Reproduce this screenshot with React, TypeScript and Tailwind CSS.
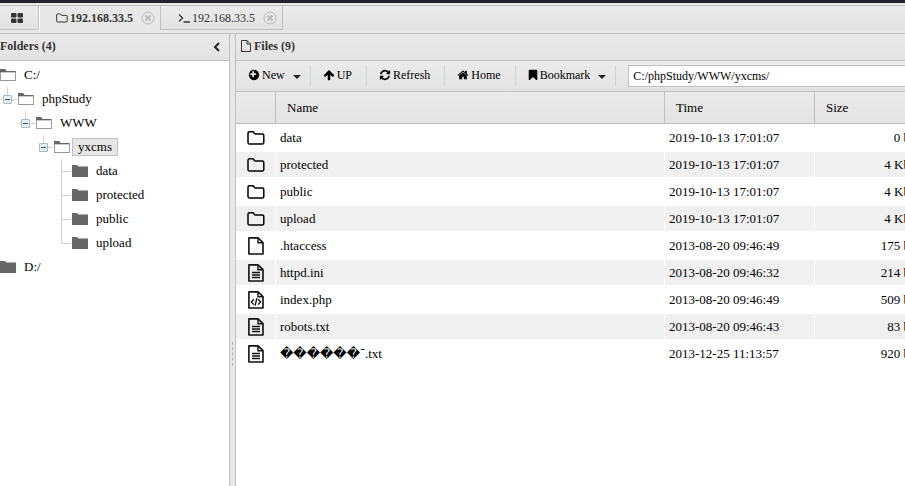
import React, { useState } from "react";

type Kind = "folder" | "file" | "text" | "code";

interface Entry {
  name: string;
  time: string;
  size: string;
  kind: Kind;
}

interface Node {
  name: string;
  open?: boolean;
  children?: Node[];
}

const entries: Entry[] = [
  { name: "data", time: "2019-10-13 17:01:07", size: "0 b", kind: "folder" },
  { name: "protected", time: "2019-10-13 17:01:07", size: "4 Kb", kind: "folder" },
  { name: "public", time: "2019-10-13 17:01:07", size: "4 Kb", kind: "folder" },
  { name: "upload", time: "2019-10-13 17:01:07", size: "4 Kb", kind: "folder" },
  { name: ".htaccess", time: "2013-08-20 09:46:49", size: "175 b", kind: "file" },
  { name: "httpd.ini", time: "2013-08-20 09:46:32", size: "214 b", kind: "text" },
  { name: "index.php", time: "2013-08-20 09:46:49", size: "509 b", kind: "code" },
  { name: "robots.txt", time: "2013-08-20 09:46:43", size: "83 b", kind: "text" },
  {
    name: "\uFFFD\uFFFD\uFFFD\uFFFD\uFFFD\uFFFD\u05BE.txt",
    time: "2013-12-25 11:13:57",
    size: "920 b",
    kind: "text",
  },
];

const tree: Node[] = [
  {
    name: "C:/",
    open: true,
    children: [
      {
        name: "phpStudy",
        open: true,
        children: [
          {
            name: "WWW",
            open: true,
            children: [
              {
                name: "yxcms",
                open: true,
                children: [
                  { name: "data" },
                  { name: "protected" },
                  { name: "public" },
                  { name: "upload" },
                ],
              },
            ],
          },
        ],
      },
    ],
  },
  { name: "D:/" },
];

const glyphs = {
  plus: "M1216 832v-128q0-26-19-45t-45-19h-256v-256q0-26-19-45t-45-19h-128q-26 0-45 19t-19 45v256h-256q-26 0-45 19t-19 45v128q0 26 19 45t45 19h256v256q0 26 19 45t45 19h128q26 0 45-19t19-45v-256h256q26 0 45-19t19-45zm448 64q0 209-103 385.5t-279.5 279.5-385.5 103-385.5-103-279.5-279.5-103-385.5 103-385.5 279.5-279.5 385.5-103 385.5 103 279.5 279.5 103 385.5z",
  up: "M1675 971q0 51-37 90l-75 75q-38 38-91 38-54 0-90-38l-294-293v704q0 52-37.5 84.5t-90.5 32.5h-128q-53 0-90.5-32.5t-37.5-84.5v-704l-294 293q-36 38-90 38t-90-38l-75-75q-38-38-38-90 0-53 38-91l651-651q35-37 90-37 54 0 91 37l651 651q37 39 37 91z",
  refresh:
    "M1639 1056q0 5-1 7-64 268-268 434.5t-478 166.5q-146 0-282.5-55t-243.5-157l-129 129q-19 19-45 19t-45-19-19-45v-448q0-26 19-45t45-19h448q26 0 45 19t19 45-19 45l-137 137q71 66 161 102t187 36q134 0 250-65t186-179q11-17 53-117 8-23 30-23h192q13 0 22.5 9.5t9.5 22.5zm25-800v448q0 26-19 45t-45 19h-448q-26 0-45-19t-19-45 19-45l138-138q-148-137-349-137-134 0-250 65t-186 179q-11 17-53 117-8 23-30 23h-199q-13 0-22.5-9.5t-9.5-22.5v-7q65-268 270-434.5t480-166.5q146 0 284 55.5t245 156.5l130-129q19-19 45-19t45 19 19 45z",
  home: "M1472 992v480q0 26-19 45t-45 19h-384v-384h-256v384h-384q-26 0-45-19t-19-45v-480q0-1 .5-3t.5-3l575-474 575 474q1 2 1 6zm223-69l-62 74q-8 9-21 11h-3q-13 0-21-7l-692-577-692 577q-12 8-24 7-13-2-21-11l-62-74q-8-10-7-23.5t11-21.5l719-599q32-26 76-26t76 26l244 204v-195q0-14 9-23t23-9h192q14 0 23 9t9 23v408l219 182q10 8 11 21.5t-7 23.5z",
  bookmark:
    "M1420 128q23 0 44 9 33 13 52.5 41t19.5 62v1289q0 34-19.5 62t-52.5 41q-19 8-44 8-48 0-83-32l-441-424-441 424q-36 33-83 33-23 0-44-9-33-13-52.5-41t-19.5-62v-1289q0-34 19.5-62t52.5-41q21-9 44-9h1048z",
};

function Glyph({ name }: { name: keyof typeof glyphs }) {
  const narrow = name === "bookmark";
  return (
    <svg
      className={narrow ? "h-3 w-[10px] shrink-0" : "size-3 shrink-0"}
      viewBox={narrow ? "149 0 1493 1792" : "0 0 1792 1792"}
      fill="currentColor"
      aria-hidden="true"
    >
      <path d={glyphs[name]} />
    </svg>
  );
}

function FolderOutline({ className, stroke }: { className: string; stroke: number }) {
  return (
    <svg className={className} viewBox="0 0 18 14" fill="none" stroke="currentColor" strokeWidth={stroke} aria-hidden="true">
      <path d="M1 2.3Q1 .8 2.6 .8H5.6Q7.1 .8 7.1 2Q7.1 3 8.5 3H15.2Q16.8 3 16.8 4.6V11.4Q16.8 13 15.2 13H2.6Q1 13 1 11.4Z" />
    </svg>
  );
}

function FileOutline({ kind }: { kind: Kind }) {
  return (
    <svg className="h-[18px] w-4" viewBox="0 0 16 18" fill="none" stroke="#111" aria-hidden="true">
      <path d="M.9 .9H10L15 5.7V17H.9Z" strokeWidth="1.6" strokeLinejoin="round" />
      <path d="M10 1V5.8H15" strokeWidth="1.4" />
      {kind === "text" && <path d="M4 8.5H12M4 11H12M4 13.5H12" strokeWidth="1.3" />}
      {kind === "code" && <path d="M5.8 8.2L3.4 11L5.8 13.6M10.2 8.2L12.6 11L10.2 13.6M8.9 7.2L7.1 14.6" strokeWidth="1.4" />}
    </svg>
  );
}

function TreeFolder({ open }: { open?: boolean }) {
  return (
    <svg className="h-3 w-4 shrink-0" viewBox="0 0 16 12" aria-hidden="true">
      {open ? (
        <>
          <path d="M0 0H5L6.5 2H16V12H0Z" fill="#999" />
          <path d="M0 0H5L6.5 2H15V3H0Z" fill="#666" />
          <path d="M1 3.5H15V11H1Z" fill="#fff" />
        </>
      ) : (
        <path d="M0 0H5L6.5 1.5H16V12H0Z" fill="#666" />
      )}
    </svg>
  );
}

function Branch({ node, last, onToggle }: { node: Node; last: boolean; onToggle: () => void }) {
  if (!node.children) {
    return (
      <svg className="h-6 w-[18px] shrink-0" viewBox="0 0 18 24" fill="none" stroke="#d0d0d0" aria-hidden="true">
        <path d={last ? "M7.5 0V12.5H17" : "M7.5 0V24M7.5 12.5H17"} />
      </svg>
    );
  }
  return (
    <button type="button" aria-label={`Toggle ${node.name}`} onClick={onToggle} className="h-6 w-[18px] shrink-0">
      <svg className="h-6 w-[18px]" viewBox="0 0 18 24" fill="none" aria-hidden="true">
        <path d="M7.5 0V8M12 12.5H17" stroke="#d0d0d0" />
        <rect x="3.5" y="8.5" width="8" height="8" rx=".5" fill="#e4eef3" stroke="#a9b9c2" />
        <path d="M5 12.5H10" stroke="#34556b" />
      </svg>
    </button>
  );
}

function TreeItem({ node, root, last, selected, onSelect }: {
  node: Node;
  root?: boolean;
  last: boolean;
  selected: string;
  onSelect: (name: string) => void;
}) {
  const [open, setOpen] = useState(Boolean(node.open));
  const active = selected === node.name;
  return (
    <li>
      <div className="flex h-6 items-center">
        {!root && <Branch node={node} last={last} onToggle={() => setOpen(!open)} />}
        <TreeFolder open={open && Boolean(node.children)} />
        <button
          type="button"
          onClick={() => onSelect(node.name)}
          className={`ml-0.5 h-[18px] border px-[5px] leading-4 ${active ? "border-[#c0c0c0] bg-[#e7e7e7]" : "border-transparent"}`}
        >
          {node.name}
        </button>
      </div>
      {open && node.children && (
        <ul className={root ? "" : "pl-[18px]"}>
          {node.children.map((child, i) => (
            <TreeItem key={child.name} node={child} last={i === node.children!.length - 1} selected={selected} onSelect={onSelect} />
          ))}
        </ul>
      )}
    </li>
  );
}

function CloseButton({ label }: { label: string }) {
  return (
    <button type="button" aria-label={label} className="ml-2">
      <svg className="size-[14px]" viewBox="0 0 14 14" fill="none" stroke="#bcbcbc" aria-hidden="true">
        <circle cx="7" cy="7" r="6" />
        <path d="M4.5 4.5L9.5 9.5M9.5 4.5L4.5 9.5" strokeWidth="2" />
      </svg>
    </button>
  );
}

function Caret() {
  return (
    <svg className="ml-1.5 mt-1 h-1 w-2" viewBox="0 0 8 4" fill="#222" aria-hidden="true">
      <path d="M0 0H8L4 4Z" />
    </svg>
  );
}

function ToolButton({ icon, label, menu }: { icon: keyof typeof glyphs; label: string; menu?: boolean }) {
  return (
    <button
      type="button"
      className={`flex h-5 shrink-0 items-center gap-0.5 border-r border-[#c3d5db] pb-0.5 pl-3 leading-[18px] ${menu ? "pr-[9px]" : "pr-[14px]"}`}
    >
      <Glyph name={icon} />
      <span>{label}</span>
      {menu && <Caret />}
    </button>
  );
}

const bar = "bg-linear-to-b from-[#ebebeb] to-[#e3e3e3]";
const headCell = "h-8 border-r border-b border-[#c0c0c0] pl-[11px] text-left font-normal";
const bodyCell = "h-[27px] border-y border-r border-white";

export default function App() {
  const [selected, setSelected] = useState("yxcms");
  const [path, setPath] = useState("C:/phpStudy/WWW/yxcms/");

  return (
    <div className="flex h-screen flex-col overflow-hidden bg-[#e8e8e8] font-['Liberation_Serif','DejaVu_Sans',serif] text-[13px] text-black">
      <div className="h-[3px] shrink-0 bg-[#23222f]" />
      <nav aria-label="Sessions" className="mt-0.5 flex h-[25px] shrink-0 border-t border-[#c0c0c0] text-xs text-[#333]">
        <div className={`flex w-[39px] border-r border-b border-[#c0c0c0] ${bar}`}>
          <button type="button" aria-label="Home" className="flex flex-1 items-center pl-[11px]">
            <svg className="h-[10px] w-3" viewBox="0 0 12 10" fill="#333" aria-hidden="true">
              <rect width="5.5" height="4.5" rx="1" />
              <rect x="6.5" width="5.5" height="4.5" rx="1" />
              <rect y="5.5" width="5.5" height="4.5" rx="1" />
              <rect x="6.5" y="5.5" width="5.5" height="4.5" rx="1" />
            </svg>
          </button>
        </div>
        <div className="flex items-center border-r border-l border-r-[#c0c0c0] border-l-white bg-[#e8e8e8] pr-[5px] pl-4">
          <button type="button" aria-current="page" className="flex items-center gap-0.5 font-bold">
            <FolderOutline className="h-[10px] w-3" stroke={1.5} />
            192.168.33.5
          </button>
          <CloseButton label="Close files tab" />
        </div>
        <div className={`flex items-center border-r border-b border-[#c0c0c0] pr-[5px] pl-[17px] ${bar}`}>
          <button type="button" className="flex items-center gap-0.5">
            <svg className="h-[10px] w-3" viewBox="0 0 12 10" fill="none" stroke="#333" strokeWidth="1.3" aria-hidden="true">
              <path d="M1 1.5L4.5 5L1 8.5M5.5 9H12" />
            </svg>
            192.168.33.5
          </button>
          <CloseButton label="Close terminal tab" />
        </div>
        <div className={`flex-1 border-b border-[#e0e0e0] ${bar}`} />
      </nav>

      <main className="mt-[3px] flex min-h-[640px] flex-1 border-t border-[#c0c0c0]">
        <aside className="flex w-[230px] shrink-0 flex-col border-r border-[#c0c0c0] bg-white">
          <div className={`flex h-[27px] items-center justify-between border-b border-[#c0c0c0] pr-2 text-xs text-[#333] ${bar}`}>
            <h2 className="pb-0.5 font-bold">Folders (4)</h2>
            <button type="button" aria-label="Collapse folders">
              <svg className="h-[10px] w-2" viewBox="0 0 8 10" fill="none" stroke="#222" strokeWidth="2" aria-hidden="true">
                <path d="M6 1L2 5L6 9" />
              </svg>
            </button>
          </div>
          <ul className="pt-0.5">
            {tree.map((node, i) => (
              <TreeItem key={node.name} node={node} root last={i === tree.length - 1} selected={selected} onSelect={setSelected} />
            ))}
          </ul>
        </aside>

        <div role="separator" aria-orientation="vertical" className="flex w-[5px] shrink-0 items-center justify-center">
          <div className="h-6 border-l border-dashed border-[#b0b0b0]" />
        </div>

        <section className="flex min-w-0 flex-1 flex-col overflow-hidden border-l border-[#c0c0c0] bg-white">
          <div className={`flex h-[27px] shrink-0 items-center gap-[3px] border-b border-[#c0c0c0] pb-0.5 pl-[5px] text-xs text-[#333] ${bar}`}>
            <svg className="h-3 w-[10px]" viewBox="0 0 10 12" fill="none" stroke="#333" aria-hidden="true">
              <path d="M.5 .5H6L9.5 4V11.5H.5ZM6 .5V4H9.5" />
            </svg>
            <h2 className="font-bold">Files (9)</h2>
          </div>

          <div className={`flex h-[31px] shrink-0 items-center border-b border-[#c0c0c0] text-xs ${bar}`}>
            <ToolButton icon="plus" label="New" menu />
            <ToolButton icon="up" label="UP" />
            <ToolButton icon="refresh" label="Refresh" />
            <ToolButton icon="home" label="Home" />
            <ToolButton icon="bookmark" label="Bookmark" menu />
            <input
              aria-label="Path"
              value={path}
              onChange={(e) => setPath(e.target.value)}
              className="ml-3 h-[22px] min-w-[300px] flex-1 border border-[#c0c0c0] bg-white px-1 outline-none"
            />
          </div>

          <table className="w-full min-w-[679px] table-fixed border-separate border-spacing-0">
            <colgroup>
              <col className="w-10" />
              <col />
              <col className="w-[150px]" />
              <col className="w-[100px]" />
            </colgroup>
            <thead className={bar}>
              <tr>
                <th className={headCell} aria-label="Type" />
                <th className={headCell}>Name</th>
                <th className={headCell}>Time</th>
                <th className={headCell}>Size</th>
              </tr>
            </thead>
            <tbody>
              {entries.map((entry) => (
                <tr key={entry.name} className="even:bg-[#f0f0f0]">
                  <td className={bodyCell}>
                    <span className="flex items-center justify-center">
                      {entry.kind === "folder" ? <FolderOutline className="h-[14px] w-[18px]" stroke={1.5} /> : <FileOutline kind={entry.kind} />}
                    </span>
                  </td>
                  <td className={`${bodyCell} pl-1`}>{entry.name}</td>
                  <td className={`${bodyCell} pl-1`}>{entry.time}</td>
                  <td className={`${bodyCell} pr-1 text-right`}>{entry.size}</td>
                </tr>
              ))}
            </tbody>
          </table>
        </section>
      </main>
    </div>
  );
}
